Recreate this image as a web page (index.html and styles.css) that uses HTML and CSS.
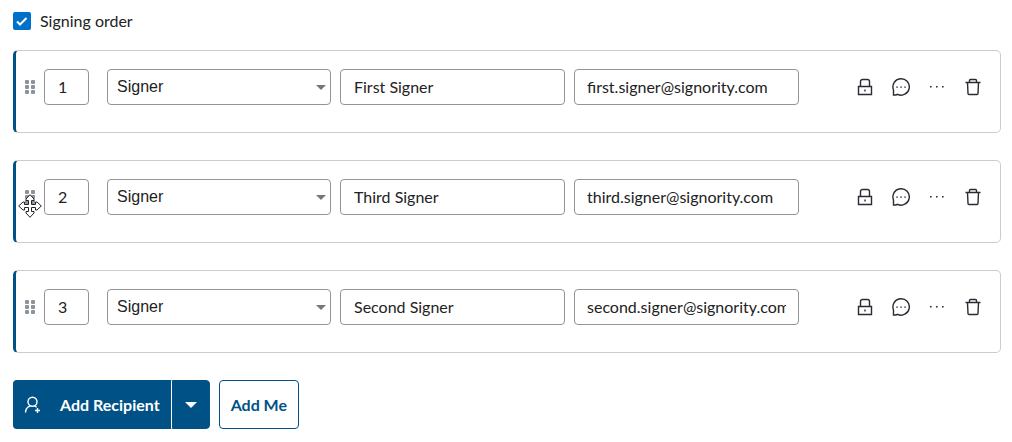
FILE: index.html
```html
<!DOCTYPE html>
<html lang="en">
<head>
    <meta charset="UTF-8">
    <meta name="viewport" content="width=device-width, initial-scale=1.0">
    <title>Recipients</title>
    <link rel="stylesheet" href="styles.css">
</head>
<body>

    <!-- Shared icons -->
    <svg class="sprite" aria-hidden="true">
        <symbol id="grip" viewBox="0 0 10 14">
            <rect x="0" y="0" width="4" height="4" rx="1"/>
            <rect x="6" y="0" width="4" height="4" rx="1"/>
            <rect x="0" y="5" width="4" height="4" rx="1"/>
            <rect x="6" y="5" width="4" height="4" rx="1"/>
            <rect x="0" y="10" width="4" height="4" rx="1"/>
            <rect x="6" y="10" width="4" height="4" rx="1"/>
        </symbol>
        <symbol id="lock" viewBox="0 0 18 18">
            <path d="M2.500 8.500h13v8h-13zM4.500 8.500V3.500a2 2 0 0 1 2-2h5a2 2 0 0 1 2 2v5M9 11.400v2.200"/>
        </symbol>
        <symbol id="comment" viewBox="0 0 18 18">
            <path d="M1.500 17V12A8.200 8.200 0 1 1 5.500 16.300L4 17Z"/>
            <path class="dots" d="M4.300 8.500h1.500v1.300h-1.500zM8.300 8.500h1.500v1.300h-1.500zM12.300 8.500h1.500v1.300h-1.500z"/>
        </symbol>
        <symbol id="more" viewBox="0 0 18 18">
            <path class="dots" d="M2 8h1.600v1.600h-1.600zM8 8h1.600v1.600h-1.600zM14 8h1.600v1.600h-1.600z"/>
        </symbol>
        <symbol id="trash" viewBox="0 0 18 18">
            <path d="M1.500 4.500h15M5.500 4.500V2.500a1 1 0 0 1 1-1h5a1 1 0 0 1 1 1v2M3.500 4.500l.5 11a1 1 0 0 0 1 1h8a1 1 0 0 0 1-1l.5-11"/>
        </symbol>
    </svg>

    <main>
        <div class="order">
            <input type="checkbox" id="signingOrder" checked>
            <label for="signingOrder">Signing order</label>
        </div>

        <div class="recipients">
            <div class="recipient">
                <div class="handle"><svg class="grip"><use href="#grip"/></svg></div>
                <input class="field number" type="text" value="1" aria-label="Order">
                <div class="role">
                    <select class="field" aria-label="Role"><option>Signer</option></select>
                </div>
                <input class="field" type="text" value="First Signer" aria-label="Name">
                <input class="field email" type="email" value="first.signer@signority.com" aria-label="Email">
                <div class="actions">
                    <button type="button" aria-label="Lock"><svg><use href="#lock"/></svg></button>
                    <button type="button" aria-label="Message"><svg><use href="#comment"/></svg></button>
                    <button type="button" aria-label="More"><svg><use href="#more"/></svg></button>
                    <button type="button" aria-label="Delete"><svg><use href="#trash"/></svg></button>
                </div>
            </div>

            <div class="recipient">
                <div class="handle">
                    <svg class="grip"><use href="#grip"/></svg>
                    <svg class="move-cursor" viewBox="0 0 24 24">
                        <path d="M12 .7L16 5v1.500h-2.500v4h4V8H19l4.300 4L19 16h-1.500v-2.500h-4v4H16V19l-4 4.300L8 19v-1.500h2.500v-4h-4V16H5L.7 12 5 8h1.500v2.500h4v-4H8V5z"/>
                    </svg>
                </div>
                <input class="field number" type="text" value="2" aria-label="Order">
                <div class="role">
                    <select class="field" aria-label="Role"><option>Signer</option></select>
                </div>
                <input class="field" type="text" value="Third Signer" aria-label="Name">
                <input class="field email" type="email" value="third.signer@signority.com" aria-label="Email">
                <div class="actions">
                    <button type="button" aria-label="Lock"><svg><use href="#lock"/></svg></button>
                    <button type="button" aria-label="Message"><svg><use href="#comment"/></svg></button>
                    <button type="button" aria-label="More"><svg><use href="#more"/></svg></button>
                    <button type="button" aria-label="Delete"><svg><use href="#trash"/></svg></button>
                </div>
            </div>

            <div class="recipient">
                <div class="handle"><svg class="grip"><use href="#grip"/></svg></div>
                <input class="field number" type="text" value="3" aria-label="Order">
                <div class="role">
                    <select class="field" aria-label="Role"><option>Signer</option></select>
                </div>
                <input class="field" type="text" value="Second Signer" aria-label="Name">
                <input class="field email" type="email" value="second.signer@signority.com" aria-label="Email">
                <div class="actions">
                    <button type="button" aria-label="Lock"><svg><use href="#lock"/></svg></button>
                    <button type="button" aria-label="Message"><svg><use href="#comment"/></svg></button>
                    <button type="button" aria-label="More"><svg><use href="#more"/></svg></button>
                    <button type="button" aria-label="Delete"><svg><use href="#trash"/></svg></button>
                </div>
            </div>
        </div>

        <div class="buttons">
            <div class="split">
                <button type="button" class="btn primary">
                    <svg class="user-icon" viewBox="0 0 18 18">
                        <path d="M1.500 16.500c0-3 1.800-5.500 4.800-6.600M10.700 9.900l2 1.400M8.500 1.200a4.500 4.500 0 1 1 0 9a4.500 4.500 0 0 1 0-9zM13.500 12v5M11 14.500h5"/>
                    </svg>
                    Add Recipient
                </button>
                <button type="button" class="btn primary toggle" aria-label="More options"><span class="caret"></span></button>
            </div>
            <button type="button" class="btn secondary">Add Me</button>
        </div>
    </main>

</body>
</html>
```
FILE: styles.css
```css
* {
    box-sizing: border-box;
}

body {
    font-family: Lato, sans-serif;
    font-size: 16px;
    line-height: 20px;
    margin: 0;
    color: #222;
    background-color: #fff;
}

.sprite {
    display: none;
}

main {
    padding: 11px 11px 12px 13px;
}

.order {
    display: flex;
    align-items: center;
    gap: 9px;
    margin-bottom: 19px;
}

.order input {
    appearance: none;
    width: 18px;
    height: 18px;
    margin: 0;
    border-radius: 2px;
    background: #0070c9 url("data:image/svg+xml,%3Csvg xmlns='http://www.w3.org/2000/svg' viewBox='0 0 18 18'%3E%3Cpath d='M4 9.500l3 3 6.500-6.500' fill='none' stroke='white' stroke-width='2'/%3E%3C/svg%3E");
}

.order input:not(:checked) {
    background: #fff;
    border: 1px solid #949494;
}

.recipients {
    display: flex;
    flex-direction: column;
    gap: 27px;
}

.recipient {
    display: grid;
    grid-template-columns: 10px 45px minmax(0, 233fr) minmax(0, 225fr) minmax(0, 225fr) auto;
    gap: 9px;
    align-items: center;
    padding: 18px 9px 27px;
    border: 1px solid #ccc;
    border-left: 3px solid #005286;
    border-radius: 5px;
}

.handle {
    position: relative;
    display: flex;
    cursor: move;
}

.grip {
    width: 10px;
    height: 14px;
    fill: #8d939c;
}

.move-cursor {
    position: absolute;
    left: -7px;
    top: 4px;
    width: 24px;
    height: 24px;
    fill: #fff;
    stroke: #222;
}

.field {
    width: 100%;
    min-width: 0;
    height: 36px;
    padding: 0 13px 2px;
    border: 1px solid #949494;
    border-radius: 4px;
    background-color: #fff;
    color: #222;
    font-family: inherit;
    font-size: 16px;
}

.email {
    padding: 0 12px 2px;
}

.role {
    position: relative;
    margin-left: 9px;
}

.role select {
    appearance: none;
    padding: 0 24px 2px 9px;
    font-family: "Liberation Sans", Arial, sans-serif;
}

.role::after {
    content: "";
    position: absolute;
    right: 5px;
    top: 16px;
    border: 5px solid transparent;
    border-top-color: #777;
    border-bottom: 0;
    pointer-events: none;
}

.actions {
    display: flex;
    margin-left: 39px;
}

.actions button {
    display: flex;
    align-items: center;
    justify-content: center;
    width: 36px;
    height: 36px;
    padding: 0;
    border: none;
    background: none;
    cursor: pointer;
}

.actions svg {
    width: 18px;
    height: 18px;
    fill: none;
    stroke: #2b2b33;
    stroke-width: 1.4;
}

.dots {
    fill: #2b2b33;
    stroke: none;
}

.buttons {
    display: flex;
    gap: 9px;
    margin-top: 27px;
}

.split {
    display: flex;
}

.btn {
    display: flex;
    align-items: center;
    justify-content: center;
    height: 49px;
    padding: 0 11px;
    border: 1px solid #005286;
    border-radius: 4px;
    font-family: inherit;
    font-size: 16px;
    font-weight: bold;
    cursor: pointer;
}

.primary {
    gap: 18px;
    background-color: #005286;
    color: #fff;
}

.split .btn:first-child {
    padding-left: 10px;
    border-right-color: #fff;
    border-radius: 4px 0 0 4px;
}

.split .toggle {
    width: 38px;
    border-radius: 0 4px 4px 0;
}

.caret {
    border: 6px solid transparent;
    border-top-color: #fff;
    border-bottom: 0;
}

.secondary {
    background-color: #fff;
    color: #005286;
}

.user-icon {
    width: 18px;
    height: 18px;
    fill: none;
    stroke: #fff;
    stroke-width: 1.4;
}
```
